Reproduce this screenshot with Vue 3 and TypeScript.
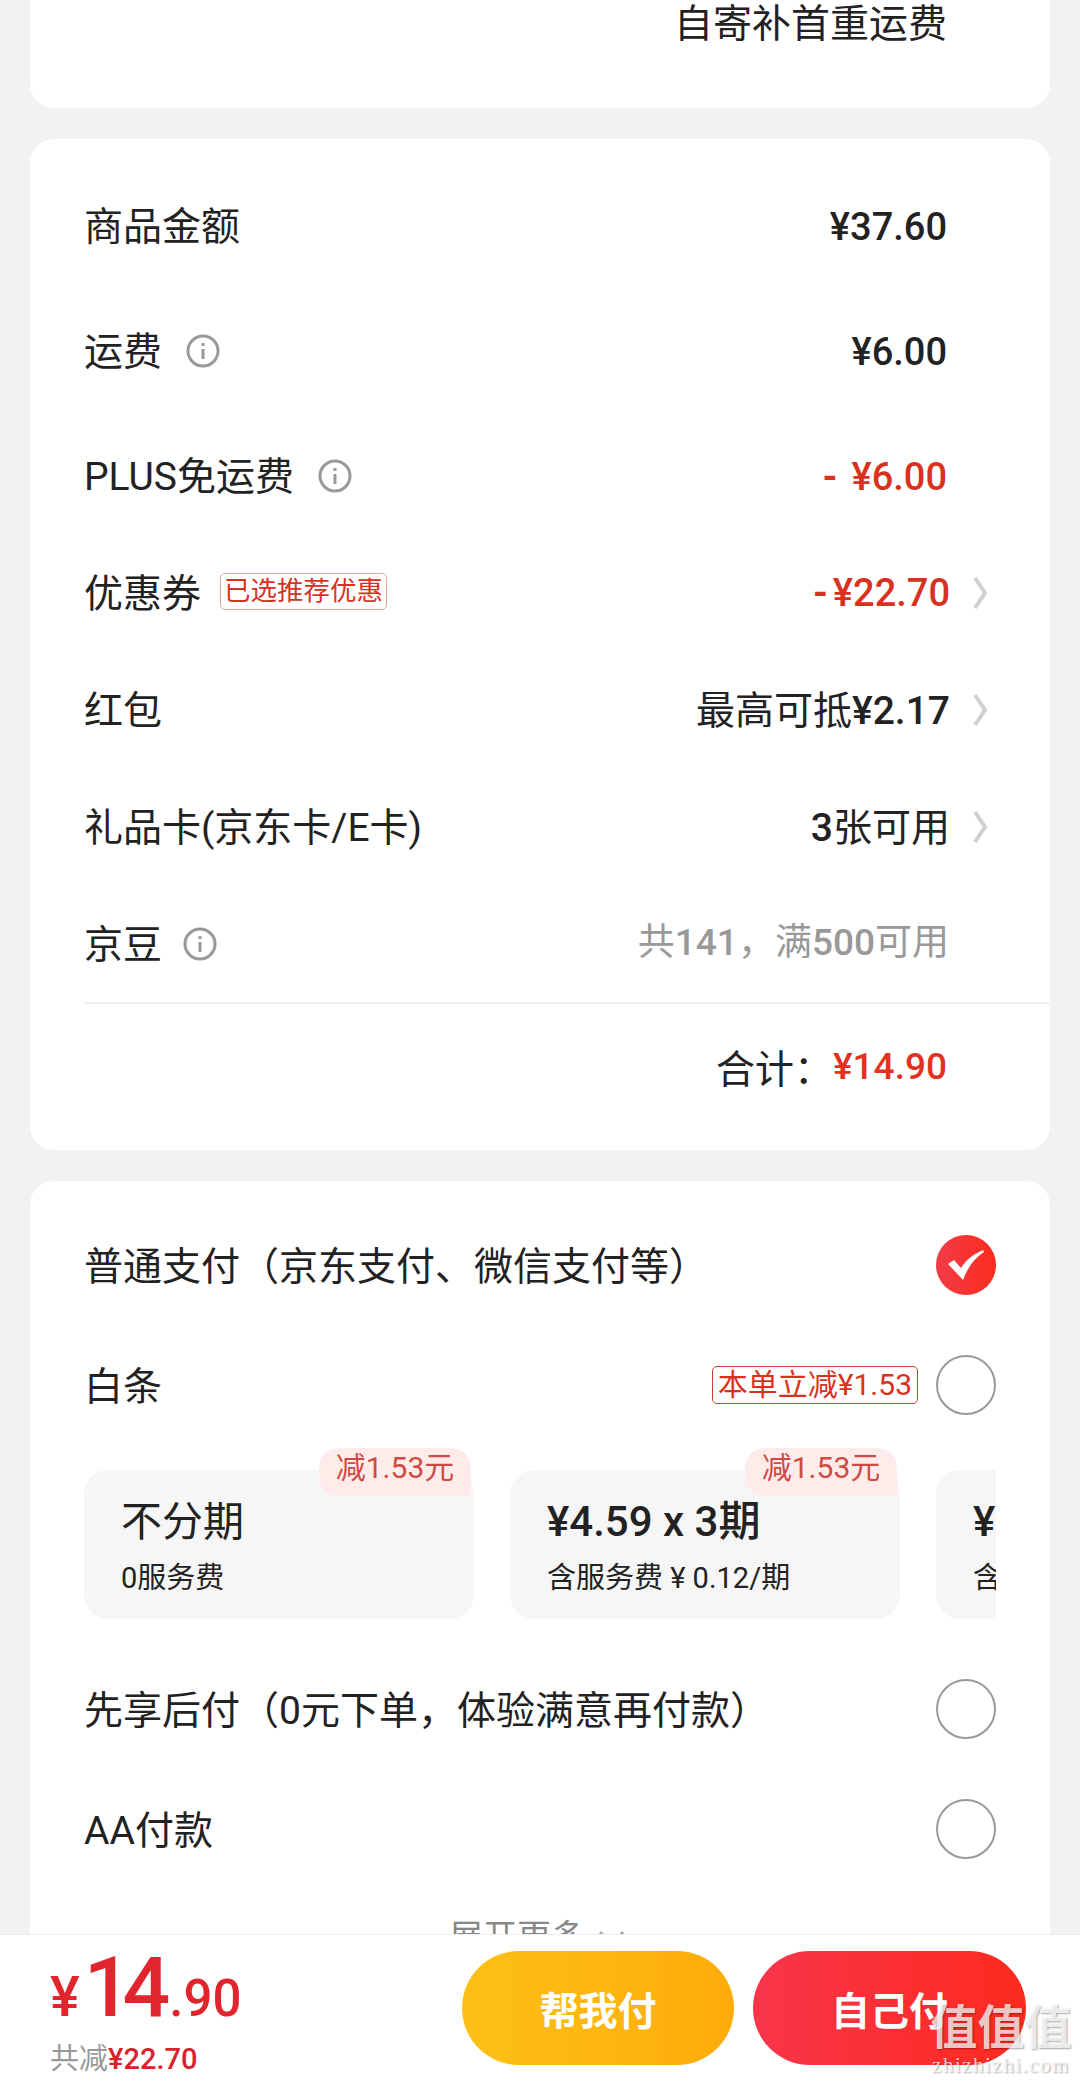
<template>
  <div class="page">
    <section class="card card--top">
      <p class="shipping-note">自寄补首重运费</p>
    </section>

    <section class="card card--fees">
      <div class="fee-row fee-row--loose">
        <span class="fee-label">商品金额</span>
        <span class="fee-value fee-value--strong">¥37.60</span>
      </div>
      <div class="fee-row fee-row--loose">
        <span class="fee-label">运费</span>
        <svg class="info-icon" viewBox="0 0 34 34">
          <circle cx="17" cy="17" r="15" />
          <path d="M17 15v10M17 9v3" />
        </svg>
        <span class="fee-value fee-value--strong">¥6.00</span>
      </div>
      <div class="fee-row fee-row--tall">
        <span class="fee-label">PLUS免运费</span>
        <svg class="info-icon" viewBox="0 0 34 34">
          <circle cx="17" cy="17" r="15" />
          <path d="M17 15v10M17 9v3" />
        </svg>
        <span class="fee-value fee-value--strong fee-value--red"><span class="dash">-</span>¥6.00</span>
      </div>
      <div class="fee-row">
        <span class="fee-label">优惠券</span>
        <span class="coupon-tag">已选推荐优惠</span>
        <span class="fee-value fee-value--strong fee-value--red fee-value--link"><span class="dash dash--tight">-</span>¥22.70</span>
        <svg class="chevron" viewBox="0 0 16 36">
          <path d="M3 3l10 15L3 33" />
        </svg>
      </div>
      <div class="fee-row">
        <span class="fee-label">红包</span>
        <span class="fee-value fee-value--link fee-value--cjk">最高可抵<b>¥2.17</b></span>
        <svg class="chevron" viewBox="0 0 16 36">
          <path d="M3 3l10 15L3 33" />
        </svg>
      </div>
      <div class="fee-row">
        <span class="fee-label">礼品卡(京东卡/E卡)</span>
        <span class="fee-value fee-value--link fee-value--cjk"><b>3</b>张可用</span>
        <svg class="chevron" viewBox="0 0 16 36">
          <path d="M3 3l10 15L3 33" />
        </svg>
      </div>
      <div class="fee-row">
        <span class="fee-label">京豆</span>
        <svg class="info-icon info-icon--tight" viewBox="0 0 34 34">
          <circle cx="17" cy="17" r="15" />
          <path d="M17 15v10M17 9v3" />
        </svg>
        <span class="fee-value fee-value--muted fee-value--cjk">共<b>141</b>，满<b>500</b>可用</span>
      </div>
      <div class="fee-total">
        <span>合计：</span><b>¥14.90</b>
      </div>
    </section>

    <section class="card card--pay">
      <div class="pay-row">
        <span class="pay-label">普通支付（京东支付、微信支付等）</span>
        <svg class="pay-check" viewBox="0 0 60 60">
          <defs>
            <linearGradient id="checkFill" x1="0" y1="0" x2="1" y2="0">
              <stop offset="0" stop-color="#f23b47" />
              <stop offset="1" stop-color="#fb2c1c" />
            </linearGradient>
          </defs>
          <circle cx="30" cy="30" r="30" fill="url(#checkFill)" />
          <path d="M12 29l6-4 7 8c5-8 11-13 22-18l1 2C38 24 32 32 27 45z" fill="#fff" />
        </svg>
      </div>
      <div class="pay-row">
        <span class="pay-label">白条</span>
        <span class="pay-tag">本单立减¥1.53</span>
        <span class="radio"></span>
      </div>

      <div class="plans">
        <div v-for="plan in plans" :key="plan.sub" class="plan">
          <span v-if="plan.badge" class="plan-badge">{{ plan.badge }}</span>
          <div class="plan-title" :class="{ 'plan-title--strong': plan.strong }">{{ plan.title }}</div>
          <div class="plan-sub">{{ plan.sub }}</div>
        </div>
      </div>

      <div class="pay-row pay-row--after-plans">
        <span class="pay-label">先享后付（0元下单，体验满意再付款）</span>
        <span class="radio"></span>
      </div>
      <div class="pay-row pay-row--last">
        <span class="pay-label">AA付款</span>
        <span class="radio"></span>
      </div>
      <div class="more">
        <span>展开更多</span>
        <svg class="more-icon" viewBox="0 0 34 24">
          <path d="M3 3l10 10L3 23M24 3l8 10-8 10" />
        </svg>
      </div>
    </section>

    <footer class="bottom-bar">
      <div class="total">
        <div class="total-price">
          <span class="total-yen">¥</span><span class="total-int">14</span><span class="total-dec">.90</span>
        </div>
        <div class="total-saved">共减<b>¥22.70</b></div>
      </div>
      <button class="pay-btn pay-btn--friend" type="button">帮我付</button>
      <button class="pay-btn pay-btn--self" type="button">自己付</button>
    </footer>

    <div class="watermark">
      <div class="watermark-mark">值值值</div>
      <div class="watermark-url">zhizhizhi.com</div>
    </div>
  </div>
</template>

<script setup lang="ts">
interface Plan {
  title: string;
  sub: string;
  badge?: string;
  strong?: boolean;
}

// Third plan is cut off by the scroller in the screenshot
const plans: Plan[] = [
  { title: '不分期', sub: '0服务费', badge: '减1.53元' },
  { title: '¥4.59 x 3期', sub: '含服务费 ¥ 0.12/期', badge: '减1.53元', strong: true },
  { title: '¥', sub: '含', strong: true }
];
</script>

<style>
html,
body {
  margin: 0;
  background: #f2f2f2;
}
</style>

<style scoped>
.page {
  position: relative;
  width: 1080px;
  height: 2083px;
  overflow: hidden;
  padding: 0 30px;
  box-sizing: border-box;
  display: flex;
  flex-direction: column;
  gap: 31px;
  background: #f2f2f2;
  color: #222;
  font-family: Roboto, "Noto Sans CJK SC", sans-serif;
}

.card {
  flex: none;
  background: #fff;
  border-radius: 24px;
}

.card--top {
  height: 108px;
  border-radius: 0 0 24px 24px;
  padding-right: 103px;
  box-sizing: border-box;
}

.shipping-note {
  margin: 0;
  text-align: right;
  font-size: 39px;
  line-height: 48px;
}

/* Fee list */
.card--fees {
  height: 1011px;
  padding-top: 28px;
  box-sizing: border-box;
}

.fee-row {
  height: 117px;
  margin-left: 54px;
  padding-right: 103px;
  display: flex;
  align-items: center;
  font-size: 39px;
}

.fee-row--loose {
  margin-bottom: 8px;
}

.fee-label {
  padding-bottom: 6px;
  white-space: nowrap;
}

.info-icon {
  flex: none;
  width: 34px;
  height: 34px;
  margin-left: 24px;
  fill: none;
  stroke: #999;
  stroke-width: 3;
}

.info-icon--tight {
  margin-left: 21px;
}

.fee-value {
  margin-left: auto;
  white-space: nowrap;
  font-size: 38px;
}

.fee-value b {
  font-weight: 500;
}

.fee-value--strong {
  font-weight: 500;
}

.fee-row--loose .fee-value,
.fee-row--tall .fee-value {
  padding-top: 2px;
}

.fee-value--cjk {
  padding-bottom: 6px;
  font-size: 39px;
}

.fee-value--red {
  color: #d8321f;
}

.fee-value--muted {
  margin-right: -2px;
  padding-bottom: 10px;
  color: #999;
  font-size: 37px;
}

.fee-value--link {
  margin-right: -1px;
}

.dash {
  margin-right: 14px;
  font-weight: 700;
}

.dash--tight {
  margin-right: 5px;
}

.chevron {
  flex: none;
  width: 16px;
  height: 36px;
  margin-left: 23px;
  margin-right: -41px;
  fill: none;
  stroke: #d0d0d0;
  stroke-width: 4;
}

.coupon-tag {
  margin-left: 19px;
  margin-bottom: 3px;
  padding: 0 3px;
  height: 35px;
  line-height: 33px;
  font-size: 26.5px;
  color: #d8321f;
  border: 1px solid #e0a59c;
  border-radius: 5px;
}

.fee-total {
  height: 124px;
  margin-left: 54px;
  padding-right: 103px;
  border-top: 2px solid #f1f1f1;
  display: flex;
  align-items: center;
  justify-content: flex-end;
  font-size: 39px;
}

.fee-total b {
  font-weight: 500;
  font-size: 37px;
  color: #e2321f;
}

/* Payment methods */
.card--pay {
  height: 800px;
  padding: 24px 54px 0;
  box-sizing: border-box;
}

.pay-row {
  height: 120px;
  display: flex;
  align-items: center;
  font-size: 39px;
}

.pay-label {
  margin-right: auto;
  padding-bottom: 4px;
  white-space: nowrap;
}

.pay-check {
  flex: none;
  width: 60px;
  height: 60px;
}

.radio {
  flex: none;
  width: 60px;
  height: 60px;
  box-sizing: border-box;
  border: 2px solid #999;
  border-radius: 50%;
}

.pay-tag {
  margin-right: 18px;
  height: 38px;
  padding: 0 5px;
  box-sizing: border-box;
  line-height: 35px;
  font-size: 30px;
  color: #d8321f;
  border: 1px solid #c9402f;
  border-radius: 5px;
  white-space: nowrap;
}

.plans {
  margin-top: 3px;
  padding-top: 22px;
  display: flex;
  gap: 36px;
  overflow: hidden;
}

.plan {
  position: relative;
  flex: none;
  width: 390px;
  height: 149px;
  padding: 26px 0 0 37px;
  box-sizing: border-box;
  background: #f6f6f6;
  border-radius: 24px;
}

.plan-badge {
  position: absolute;
  top: -22px;
  right: 3px;
  width: 152px;
  height: 48px;
  line-height: 40px;
  text-align: center;
  font-size: 30px;
  color: #cf4a44;
  background: #ffecea;
  border-radius: 20px 20px 0 20px;
}

.plan-title {
  font-size: 41px;
  line-height: 52px;
  white-space: nowrap;
}

.plan-title--strong {
  font-size: 42px;
  font-weight: 500;
}

.plan-sub {
  margin-top: 12px;
  font-size: 29px;
  line-height: 36px;
  white-space: nowrap;
}

.pay-row--after-plans {
  margin-top: 30px;
}

.pay-row--last {
  margin-bottom: 26px;
}

.more {
  display: flex;
  justify-content: center;
  align-items: flex-start;
  gap: 12px;
  font-size: 34px;
  line-height: 44px;
  color: #888;
}

.more-icon {
  flex: none;
  width: 34px;
  height: 24px;
  margin-top: 14px;
  fill: none;
  stroke: #aaa;
  stroke-width: 3;
}

/* Bottom bar */
.bottom-bar {
  position: absolute;
  left: 0;
  right: 0;
  bottom: 0;
  height: 149px;
  padding: 0 54px 2px 50px;
  box-sizing: border-box;
  display: flex;
  align-items: center;
  gap: 19px;
  background: #fff;
  border-top: 1px solid #eee;
}

.total {
  margin-right: auto;
  padding-top: 6px;
}

.total-price {
  display: flex;
  align-items: baseline;
  color: #e1252d;
  line-height: 84px;
  font-weight: 500;
}

.total-yen {
  font-size: 56px;
}

.total-int {
  font-size: 84px;
  letter-spacing: -9px;
  margin-left: 4px;
}

.total-dec {
  font-size: 51px;
  margin-left: 8px;
}

.total-saved {
  font-size: 29px;
  line-height: 36px;
  color: #999;
}

.total-saved b {
  font-weight: 500;
  color: #d9232c;
}

.pay-btn {
  flex: none;
  height: 114px;
  padding: 0;
  border: 0;
  border-radius: 57px;
  color: #fff;
  font-family: inherit;
  font-size: 39px;
  font-weight: 700;
}

.pay-btn--friend {
  width: 272px;
  background: linear-gradient(90deg, #fcc016, #ffac0a);
}

.pay-btn--self {
  width: 273px;
  background: linear-gradient(90deg, #f8354a, #fd2a1e);
}

/* Site watermark over the corner */
.watermark {
  position: absolute;
  right: 8px;
  bottom: 6px;
  width: 142px;
  text-align: center;
  color: rgba(255, 255, 255, 0.75);
  text-shadow: 1px 1px 2px rgba(0, 0, 0, 0.35);
}

.watermark-mark {
  font-size: 47px;
  font-weight: 700;
  line-height: 50px;
  white-space: nowrap;
}

.watermark-url {
  font-size: 21px;
  line-height: 24px;
  font-family: "Liberation Serif", serif;
  letter-spacing: 1.5px;
  white-space: nowrap;
}
</style>
